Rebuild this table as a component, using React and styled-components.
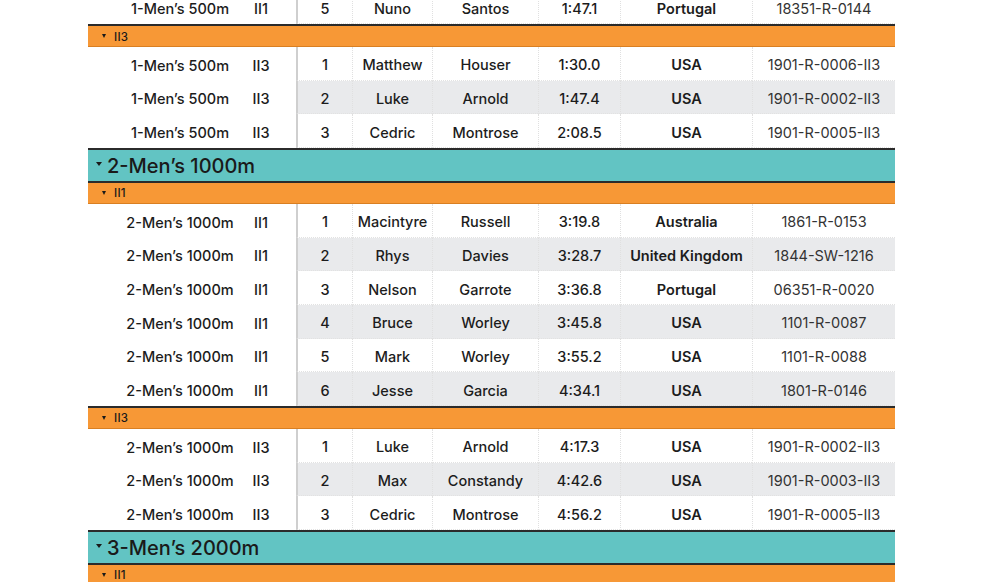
import React from "react";
import styled, { createGlobalStyle } from "styled-components";

const Global = createGlobalStyle`
  html, body { margin: 0; padding: 0; background: #fff; overflow: hidden; }
  body { font-family: Inter, "Liberation Sans", sans-serif; color: #1c1c1c; }
`;

const Sheet = styled.div`
  width: 807px;
  margin: -9.67px 0 0 88px;
  display: flex;
  flex-direction: column;
`;

const COLS = "28px 128px 34px 18px 56px 80px 106px 82px 132px 143px";

const Row = styled.div`
  display: grid;
  grid-template-columns: ${COLS};
  height: 33.67px;
`;

const Label = styled.div`
  box-sizing: border-box;
  display: flex;
  align-items: center;
  justify-content: center;
  padding-top: 3px;
  font-size: 14.5px;
  font-weight: 500;
  white-space: nowrap;
  background: #fff;
`;

const Cell = styled.div`
  box-sizing: border-box;
  display: flex;
  align-items: center;
  justify-content: center;
  padding-top: 3px;
  white-space: nowrap;
  font-size: 14.5px;
  font-weight: ${(p) => p.$weight || 500};
  color: ${(p) => (p.$weight === 400 ? "#333" : "#1c1c1c")};
  background: ${(p) => (p.$shade ? "#e9eaec" : "#fff")};
  border-left: ${(p) => (p.$first ? "2px solid #cfcfcf" : "1px dotted #e0e0e0")};
  border-bottom: 1px dotted #e2e2e2;
`;

const EventHeader = styled.div`
  box-sizing: border-box;
  height: 33px;
  border-top: 2px solid #2b2b2b;
  background: #62c4c3;
  display: flex;
  align-items: center;
  padding: 2px 0 0 8px;
  gap: 5px;
  font-size: 20px;
  font-weight: 500;
  color: #1a1a1a;
`;

const HeatHeader = styled.div`
  box-sizing: border-box;
  height: 23px;
  border-top: 2px solid #2b2b2b;
  border-bottom: 1px solid #d97f22;
  background: #f79836;
  display: flex;
  align-items: center;
  padding: 1px 0 0 14px;
  gap: 8px;
  font-size: 11.5px;
  font-weight: 500;
  letter-spacing: 0.3px;
  color: #1a1a1a;
`;

const Tri = styled.span`
  display: inline-block;
  width: 0;
  height: 0;
  border-left: ${(p) => p.$s}px solid transparent;
  border-right: ${(p) => p.$s}px solid transparent;
  border-top: ${(p) => p.$s * 1.5}px solid #1a1a1a;
  margin-bottom: ${(p) => p.$lift}px;
`;

const r = (event, heat, place, first, last, time, country, id) => ({
  event, heat, place, first, last, time, country, id,
});

const sections = [
  { type: "rows", rows: [r("1-Men’s 500m", "II1", 5, "Nuno", "Santos", "1:47.1", "Portugal", "18351-R-0144")] },
  { type: "heat", label: "II3" },
  {
    type: "rows",
    rows: [
      r("1-Men’s 500m", "II3", 1, "Matthew", "Houser", "1:30.0", "USA", "1901-R-0006-II3"),
      r("1-Men’s 500m", "II3", 2, "Luke", "Arnold", "1:47.4", "USA", "1901-R-0002-II3"),
      r("1-Men’s 500m", "II3", 3, "Cedric", "Montrose", "2:08.5", "USA", "1901-R-0005-II3"),
    ],
  },
  { type: "event", label: "2-Men’s 1000m" },
  { type: "heat", label: "II1" },
  {
    type: "rows",
    rows: [
      r("2-Men’s 1000m", "II1", 1, "Macintyre", "Russell", "3:19.8", "Australia", "1861-R-0153"),
      r("2-Men’s 1000m", "II1", 2, "Rhys", "Davies", "3:28.7", "United Kingdom", "1844-SW-1216"),
      r("2-Men’s 1000m", "II1", 3, "Nelson", "Garrote", "3:36.8", "Portugal", "06351-R-0020"),
      r("2-Men’s 1000m", "II1", 4, "Bruce", "Worley", "3:45.8", "USA", "1101-R-0087"),
      r("2-Men’s 1000m", "II1", 5, "Mark", "Worley", "3:55.2", "USA", "1101-R-0088"),
      r("2-Men’s 1000m", "II1", 6, "Jesse", "Garcia", "4:34.1", "USA", "1801-R-0146"),
    ],
  },
  { type: "heat", label: "II3" },
  {
    type: "rows",
    rows: [
      r("2-Men’s 1000m", "II3", 1, "Luke", "Arnold", "4:17.3", "USA", "1901-R-0002-II3"),
      r("2-Men’s 1000m", "II3", 2, "Max", "Constandy", "4:42.6", "USA", "1901-R-0003-II3"),
      r("2-Men’s 1000m", "II3", 3, "Cedric", "Montrose", "4:56.2", "USA", "1901-R-0005-II3"),
    ],
  },
  { type: "event", label: "3-Men’s 2000m" },
  { type: "heat", label: "II1" },
];

function DataRow({ d }) {
  const shade = d.place % 2 === 0;
  return (
    <Row>
      <Label />
      <Label>{d.event}</Label>
      <Label>{d.heat}</Label>
      <Label />
      <Cell $first $shade={shade}>{d.place}</Cell>
      <Cell $shade={shade}>{d.first}</Cell>
      <Cell $shade={shade}>{d.last}</Cell>
      <Cell $shade={shade}>{d.time}</Cell>
      <Cell $shade={shade} $weight={600}>{d.country}</Cell>
      <Cell $shade={shade} $weight={400}>{d.id}</Cell>
    </Row>
  );
}

export default function App() {
  return (
    <>
      <Global />
      <Sheet>
        {sections.map((s, i) => {
          if (s.type === "event")
            return (
              <EventHeader key={i}>
                <Tri $s={3} $lift={5} />
                {s.label}
              </EventHeader>
            );
          if (s.type === "heat")
            return (
              <HeatHeader key={i}>
                <Tri $s={2.8} $lift={1} />
                {s.label}
              </HeatHeader>
            );
          return s.rows.map((d, j) => <DataRow key={`${i}-${j}`} d={d} />);
        })}
      </Sheet>
    </>
  );
}
